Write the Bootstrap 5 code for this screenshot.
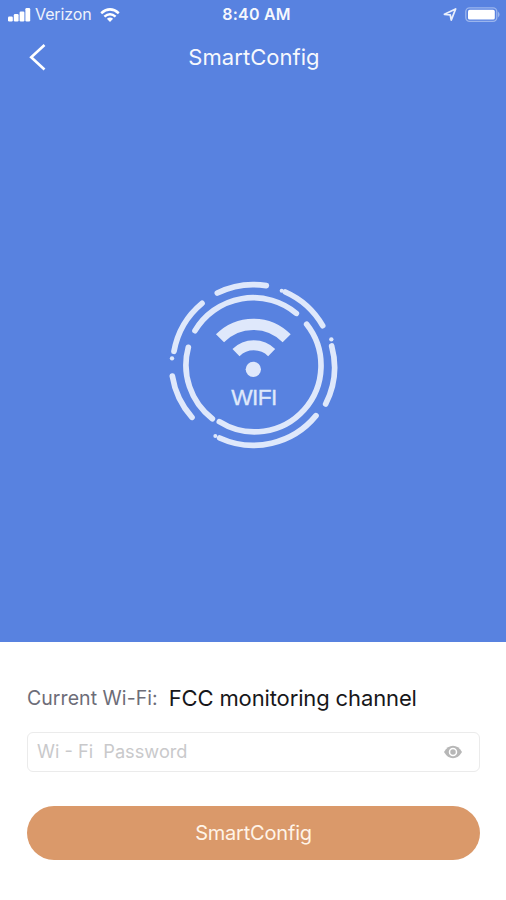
<!DOCTYPE html>
<html lang="en">
<head>
<meta charset="utf-8">
<meta name="viewport" content="width=device-width, initial-scale=1">
<title>SmartConfig</title>
<link href="https://cdn.jsdelivr.net/npm/bootstrap@5.3.0/dist/css/bootstrap.min.css" rel="stylesheet">
<style>
body{font-family:Inter,"Liberation Sans",sans-serif;height:900px;overflow:hidden}
svg{display:block;flex:none}
.hero{background:#5882e0;height:642px}
.status{height:29px;padding:0 5px 0 8px;font-size:16px;line-height:29px}
.status>div{flex:1 1 0}
.carrier{font-size:16px;letter-spacing:-.1px;margin:0 8px 0 4px;opacity:.9}
.clock{font-size:16px;font-weight:600;letter-spacing:.2px;opacity:.95;margin:0 -2px 0 2px}
.topbar{height:57px;padding:0 28px}
.title{font-size:22px;letter-spacing:.05px;font-weight:400;opacity:.95}
.emblem{padding:184px 0 0 4px}
.panel{padding:40px 26px 0 27px}
.current{height:32px;line-height:32px}
.net-label{font-size:19.5px;color:#6d6d78;letter-spacing:.05px;margin-right:11px}
.net-name{font-size:22px;color:#17171a;letter-spacing:-.13px}
.pass{height:40px;margin-top:18px;border:1.5px solid #ebebeb;border-radius:6px;padding:0 16px 0 9px}
.pass input{font-size:18.2px;height:36px;padding:0 0 2px;background:none}
.pass input::placeholder{color:#c9c9cb;opacity:1}
.go{height:54px;margin-top:34px;background:#da996a;font-size:20px;letter-spacing:-.2px;color:#fff4e8;padding:0}
.go:hover{background:#d08d5d;color:#fff}
</style>
<script src="https://cdn.jsdelivr.net/npm/bootstrap@5.3.0/dist/js/bootstrap.bundle.min.js"></script>
</head>
<body class="bg-white">
<main>
<section class="hero text-white">
  <div class="status d-flex align-items-center">
    <div class="d-flex align-items-center">
      <svg width="23" height="14" viewBox="0 0 23 14" fill="#fff"><rect x="0" y="8.5" width="4.8" height="5" rx="1.2"/><rect x="5.8" y="6" width="4.8" height="7.5" rx="1.2"/><rect x="11.6" y="3.5" width="4.8" height="10" rx="1.2"/><rect x="17.4" y="0" width="4.8" height="13.5" rx="1.2"/></svg>
      <span class="carrier">Verizon</span>
      <svg width="20" height="14" viewBox="0 0 20 14" fill="none" stroke="#fff" stroke-width="2.5"><path d="M1.2 5.2Q10-2.4 18.8 5.2M4.4 8.6Q10 3.8 15.6 8.6"/><path d="M6.9 10.8Q10 8.2 13.1 10.8L10 14Z" fill="#fff" stroke="none"/></svg>
    </div>
    <span class="clock">8:40 AM</span>
    <div class="d-flex align-items-center justify-content-end">
      <svg width="14" height="14" viewBox="0 0 14 14" fill="none" stroke="#e9effc" stroke-width="1.8" stroke-linejoin="round"><path d="M1.4 6.3L12.6 1L8.3 12L7.2 6.8Z"/></svg>
      <svg class="ms-2" width="36" height="16" viewBox="0 0 36 16"><rect x=".8" y=".8" width="31" height="13.6" rx="3.8" fill="none" stroke="#9bb5ed" stroke-width="1.3"/><rect x="3" y="2.8" width="26.8" height="9.8" rx="1.7" fill="#fff"/><path d="M33.2 4.6Q35.8 7.6 33.2 10.6Z" fill="#abc1f0"/></svg>
    </div>
  </div>
  <header class="topbar d-flex align-items-center">
    <svg width="18" height="28" viewBox="0 0 18 28" fill="none" stroke="#fff" stroke-width="2.6"><path d="M16.5 1L3.2 13.2L16.5 25.5"/></svg>
    <h1 class="title flex-fill text-center mb-0 me-3">SmartConfig</h1>
  </header>
  <div class="emblem d-flex justify-content-center">
    <svg width="190" height="190" viewBox="0 0 570 570" fill="none" stroke="#dfe8fb" stroke-width="17" stroke-linecap="round">
      <path d="M172 69A243 243 0 0 1 319 47M376 66A243 243 0 0 1 488 167M515 228A243 243 0 0 1 497 402M468 437A243 243 0 0 1 179 504M96 442A243 243 0 0 1 37 318M42 244A243 243 0 0 1 126 100"/>
      <path d="M105 182A203 203 0 0 1 409 130M440 163A199 199 0 0 1 178 455M157 446A203 203 0 0 1 85 232"/>
      <g fill="#dfe8fb" stroke="none"><circle cx="365" cy="62" r="6"/><circle cx="514" cy="208" r="6.5"/><circle cx="36" cy="265" r="6.5"/><circle cx="166" cy="498" r="6"/><circle cx="280" cy="298" r="23"/></g>
      <g stroke-linecap="butt"><path d="M180 205A140 140 0 0 1 380 205" stroke-width="34"/><path d="M228 248A76 76 0 0 1 335 248" stroke-width="30"/></g>
      <text x="283" y="404" text-anchor="middle" font-family="Liberation Sans, sans-serif" font-size="68" textLength="138" fill="#dfe8fb" stroke="#dfe8fb" stroke-width="1">WIFI</text>
    </svg>
  </div>
</section>
<section class="panel">
  <div class="current d-flex align-items-center text-nowrap"><span class="net-label">Current Wi-Fi:</span><span class="net-name">FCC monitoring channel</span></div>
  <div class="pass d-flex align-items-center">
    <input class="form-control border-0 shadow-none" type="password" placeholder="Wi - Fi  Password" aria-label="Wi-Fi password">
    <svg width="20" height="14" viewBox="0 0 20 14"><path d="M1 7Q4.6 .8 10 .8T19 7Q15.4 13.2 10 13.2T1 7Z" fill="#b7b7b7"/><circle cx="10" cy="7" r="3.5" fill="#b7b7b7" stroke="#fff" stroke-width="1.5"/></svg>
  </div>
  <button class="go btn rounded-pill border-0 w-100" type="button">SmartConfig</button>
</section>
</main>
</body>
</html>
